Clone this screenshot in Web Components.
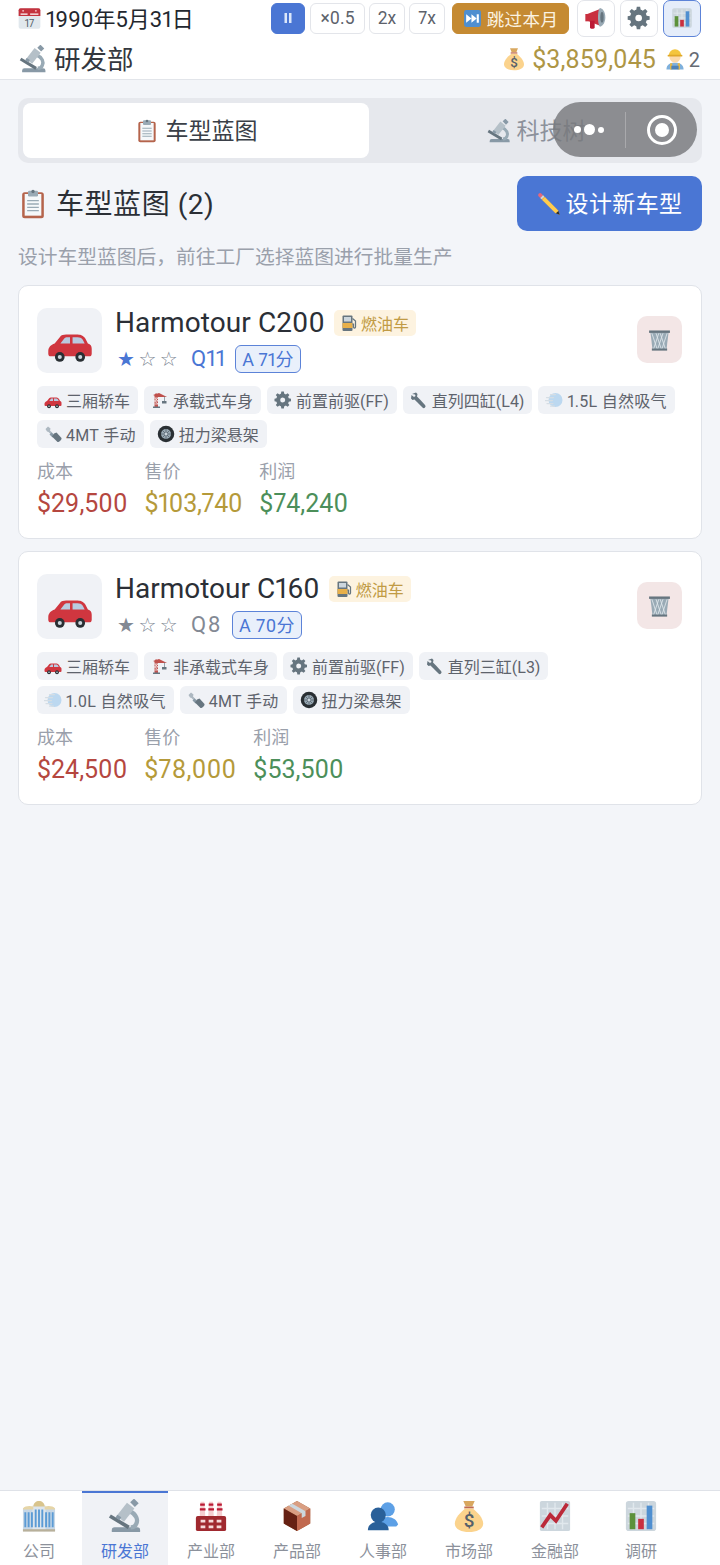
<!DOCTYPE html>
<html lang="zh"><head><meta charset="utf-8"><title>研发部</title>
<style>
html,body{margin:0;padding:0;height:100%}
body{background:#f3f5f9;font-family:Roboto,"Noto Sans CJK SC",sans-serif;color:#2b2f36;font-variant-numeric:proportional-nums}
</style></head><body>
<game-app></game-app>
<script>
const ICONS={
calendar:`<rect x="1" y="2" width="34" height="32" rx="3" fill="#e1e8ed"/><path d="M1 5a3 3 0 0 1 3-3h28a3 3 0 0 1 3 3v9H1z" fill="#c4333f"/><circle cx="8" cy="6" r="1.500" fill="#f5c0c5"/><circle cx="28" cy="6" r="1.500" fill="#f5c0c5"/><path d="M4 11h11M19 11h13" stroke="#fff" stroke-width="2"/><text x="18" y="31" text-anchor="middle" font-size="16" font-family="Roboto" fill="#55606a">17</text>`,
scope:`<path d="M4 35v-2a3 3 0 0 1 3-3h24a3 3 0 0 1 3 3v2z" fill="#8899a6"/><path d="M23 13c7 3 9 9 7 13-1 3-3 4-6 4" stroke="#99aab5" stroke-width="4.500" fill="none"/><path d="M2 18l20 12" stroke="#66757f" stroke-width="4"/><path d="M13 21l11-14" stroke="#b5c0c8" stroke-width="10"/><path d="M26 6l4-4" stroke="#8899a6" stroke-width="7"/><path d="M12 18l-2 3" stroke="#8899a6" stroke-width="5"/>`,
bag:`<path d="M12 2h12l-2.500 6h-7z" fill="#d9a860"/><rect x="13" y="8" width="10" height="2" fill="#bf6952"/><path d="M14 10h8c5 4 11 10 11 16 0 6-7 9-15 9S3 32 3 26c0-6 6-12 11-16z" fill="#fbd38d"/><text x="18" y="30" text-anchor="middle" font-size="20" font-weight="500" font-family="Roboto" fill="#55606a">$</text>`,
worker:`<path d="M4 35c0-8 6-11 14-11s14 3 14 11z" fill="#7eb0dc"/><path d="M10 25h3.500v10H10zM22.500 25H26v10h-3.500z" fill="#e8b83f"/><rect x="12" y="29" width="12" height="6" fill="#4d82b8"/><circle cx="18" cy="15" r="9" fill="#fcd9a8"/><path d="M8 12a10 10 0 0 1 20 0z" fill="#f4c53c"/><rect x="6" y="11" width="24" height="3" rx="1" fill="#e0a828"/>`,
pause:`<path d="M11 8h5v20h-5zM20 8h5v20h-5z" fill="#dbe7fa"/>`,
skip:`<rect x="2" y="2" width="32" height="32" rx="4" fill="#4f8fd0"/><path d="M6 10l10 8-10 8zM16 10l10 8-10 8z" fill="#fff"/><path d="M26 10h4v16h-4z" fill="#fff"/>`,
mega:`<path d="M5 12l20-8v26L5 22z" fill="#c9303f" /><path d="M2 12h5v11H2z" fill="#c9303f"/><path d="M9 22h7v10a2 2 0 0 1-2 2h-3a2 2 0 0 1-2-2z" fill="#bb1a34"/><path d="M24 3c5 1 8 7 8 14s-3 13-8 14c-2-1-3-7-3-14s1-13 3-14z" fill="#99aab5"/><ellipse cx="27" cy="17" rx="2.500" ry="8" fill="#66757f"/>`,
gear:`<path fill="#66757f" d="M34 20.500v-5l-4.500-.8a12 12 0 0 0-1.300-3.100l2.600-3.700-3.500-3.500-3.700 2.600a12 12 0 0 0-3.100-1.300L19.700 1h-5l-.8 4.700a12 12 0 0 0-3.100 1.300L7.100 4.400 3.600 7.900l2.600 3.700a12 12 0 0 0-1.300 3.100L1 15.500v5l3.900.8a12 12 0 0 0 1.300 3.100l-2.600 3.700 3.500 3.500 3.700-2.600a12 12 0 0 0 3.100 1.300l.8 4.700h5l.8-4.700a12 12 0 0 0 3.100-1.300l3.700 2.600 3.500-3.500-2.600-3.700a12 12 0 0 0 1.300-3.100zM17.500 23a5 5 0 1 1 0-10 5 5 0 0 1 0 10z"/>`,
chart:`<rect x="2" y="2" width="32" height="32" rx="3" fill="#ccd6dd"/><path d="M4 10h28M4 18h28M4 26h28M10 4v28M18 4v28M26 4v28" stroke="#e1e8ed" stroke-width="1.500"/><rect x="6" y="15" width="6" height="17" fill="#5c913b"/><rect x="15" y="21" width="6" height="11" fill="#c9303f"/><rect x="24" y="7" width="6" height="25" fill="#4f8fd0"/>`,
clip:`<rect x="5" y="4" width="26" height="31" rx="3" fill="#b5644c"/><rect x="8" y="6" width="20" height="26" fill="#f5f8fa"/><path d="M11 14h14M11 18h14M11 22h14M11 26h14" stroke="#99aab5" stroke-width="1.600"/><rect x="12" y="2" width="12" height="7" rx="1.500" fill="#99aab5"/><circle cx="18" cy="3" r="2" fill="#66757f"/>`,
pencil:`<path d="M9 5l23 23 2 6-6-2L5 9z" fill="#f4ac3d"/><path d="M5 9l4-4-3-3a3 3 0 0 0-4 4z" fill="#e8677b"/><path d="M9 5L5 9l2 2 4-4z" fill="#ccd6dd"/><path d="M28 32l4-4 2 6z" fill="#292f33"/><path d="M12 8l20 20-4 4L8 12z" fill="#ffcc4d"/>`,
car:`<path d="M1 26c0-3 2-5 5-6l4-5c1-1.500 3-2 5-2h8c3 0 5 .5 7 3l2 4c2 .5 3 2 3 4v4a2 2 0 0 1-2 2H3a2 2 0 0 1-2-2z" fill="#d0363f"/><path d="M10.500 20l3-4c.5-.7 1.500-1 2.500-1h2v5zM20 15h4c1.500 0 3 .5 4 2l1.500 3H20z" fill="#b9cbe0"/><circle cx="10" cy="30.500" r="3.800" fill="#292f33"/><circle cx="10" cy="30.500" r="1.600" fill="#ccd6dd"/><circle cx="26" cy="30.500" r="3.800" fill="#292f33"/><circle cx="26" cy="30.500" r="1.600" fill="#ccd6dd"/>`,
pump:`<rect x="5" y="3" width="20" height="31" rx="2" fill="#66757f"/><rect x="8" y="6" width="14" height="9" fill="#ccd6dd"/><rect x="5" y="18" width="20" height="10" fill="#e8b04a"/><path d="M25 9l6 5v12a2 2 0 0 1-4 0v-6h-2" fill="none" stroke="#66757f" stroke-width="2.500"/>`,
trash:`<path d="M5 8h26l-3 25H8z" fill="#99aab5"/><path d="M7 9l8 24M13 9l8 24M19 9l8 24M29 9l-8 24M23 9l-8 24M17 9L9 33" stroke="#e1e8ed" stroke-width="1.200" fill="none"/><rect x="3" y="5" width="30" height="3.500" fill="#66757f"/><rect x="7" y="31" width="22" height="3" fill="#66757f"/>`,
crane:`<path d="M10 4l4 4v24H7V8z" fill="#b8433f" opacity=".9"/><path d="M7 14h7M7 20h7M7 26h7M7 14l7 6M14 14l-7 6M7 20l7 6" stroke="#fff" stroke-width="1.300"/><path d="M4 8l12-4 16 8H14z" fill="#c0504c"/><rect x="4" y="31" width="14" height="3" fill="#66757f"/><path d="M22 20h9v5h-9z" fill="#66757f"/><path d="M27 11v9" stroke="#66757f" stroke-width="1.300"/>`,
wrench:`<path fill="#66757f" d="M4 6l8-3 3 3-1 5 6 6 10 11a3.500 3.500 0 0 1-5 5L14 22l-5-5-4 1-3-3 1-7 5 4 3-2-1-3z"/>`,
wind:`<circle cx="21" cy="18" r="14" fill="#bcd8f0"/><path d="M11 7h10M3 13h14M1 19h14M4 25h12M11 30h8" stroke="#d5dde4" stroke-width="2.500" stroke-linecap="round"/>`,
spanner:`<path d="M3 8l5-5 5 4-1 4 7 7-3 3-7-7-3-1z" fill="#adb8c1"/><path d="M15 15l6 6-4 4-6-6z" fill="#8899a6"/><path d="M20 17l5-2 10 11c1 3-5 9-8 8L16 23z" fill="#66757f"/>`,
wheel:`<circle cx="18" cy="18" r="16.500" fill="#292f33"/><circle cx="18" cy="18" r="10" fill="#99aab5"/><path d="M18 8v20M8 18h20M11 11l14 14M25 11L11 25" stroke="#55606a" stroke-width="1.600"/><circle cx="18" cy="18" r="2.500" fill="#ccd6dd"/>`,
hq:`<rect x="1" y="10" width="12" height="24" fill="#c7d7e6"/><rect x="23" y="10" width="12" height="24" fill="#c7d7e6"/><rect x="11" y="7" width="14" height="27" fill="#dde5ec"/><path d="M1 10c2-3 8-3 11-2v3H1zM24 8c3-1 9-1 11 2v1H24z" fill="#e6d5a7"/><path d="M12 8c0-4 3-6 6-6s6 2 6 6z" fill="#d9c48c"/><path d="M3.500 14v16M7 14v16M10.500 14v16M14.500 11v19M18 11v19M21.500 11v19M25.500 14v16M29 14v16M32.500 14v16" stroke="#5b9bd5" stroke-width="2"/><rect x="1" y="32" width="34" height="2.500" fill="#b8b09a"/>`,
factory:`<path d="M7 3h4l1 16H6zM16 3h4l1 16h-6zM25 3h4l1 16h-6z" fill="#f5ced0"/><path d="M6.500 6h5M6.200 11h6M15.500 6h5M15.200 11h6M24.500 6h5M24.200 11h6" stroke="#bb1a34" stroke-width="2.500"/><rect x="2" y="18" width="32" height="16" rx="2" fill="#a0292f"/><path d="M7 22h5v3H7zM15.500 22h5v3h-5zM24 22h5v3h-5zM7 28h5v3H7zM15.500 28h5v3h-5zM24 28h5v3h-5z" fill="#f5d9d9"/>`,
box:`<path d="M18 2l14 8v16L18 34 4 26V10z" fill="#a0663f"/><path d="M18 2l14 8-14 8L4 10z" fill="#d99e82"/><path d="M18 18l14-8v16L18 34z" fill="#c1694f"/><path d="M4 10l14 8v16L4 26z" fill="#662113"/><path d="M9 7l14 8v5l4-2v-5L13 5z" fill="#ccd6dd"/>`,
people:`<circle cx="23" cy="11" r="7.500" fill="#5da0e6"/><path d="M13 28c0-6 5-9 10-9s10 3 11 8l-2 2H15z" fill="#5da0e6"/><circle cx="13" cy="17" r="8" fill="#2a6099"/><path d="M2 33c0-6 5-9 11-9s11 3 11 9z" fill="#2a6099"/>`,
trend:`<rect x="2" y="2" width="32" height="32" rx="2" fill="#ccd6dd"/><path d="M4 10h28M4 18h28M4 26h28M10 4v28M18 4v28M26 4v28" stroke="#e1e8ed" stroke-width="1.500"/><path d="M4 30l9-13 6 6L31 5" fill="none" stroke="#bb2a3a" stroke-width="4"/>`,
};
class EmojiIcon extends HTMLElement{
  connectedCallback(){
    const s=this.getAttribute('size')||20;
    const r=this.shadowRoot||this.attachShadow({mode:'open'});
    r.innerHTML=`<style>:host{display:inline-flex;flex:none;width:${s}px;height:${s}px}svg{width:100%;height:100%;display:block}</style><svg viewBox="0 0 36 36" aria-hidden="true">${ICONS[this.getAttribute('name')]||''}</svg>`;
  }
}
customElements.define('emoji-icon',EmojiIcon);

class CtrlBtn extends HTMLElement{
  constructor(){super();this.attachShadow({mode:'open'}).innerHTML=`<style>
  :host{display:inline-flex;align-items:center;justify-content:center;box-sizing:border-box;height:31px;flex:none;border:1.5px solid #e3e5ea;border-radius:6px;background:#fff;color:#5d626b;font-size:17.500px;gap:5px;padding-bottom:1px}
  :host([kind=play]){background:#4a76d4;border-color:#4a76d4;width:34px;margin-right:1px}
  :host([kind=skip]){background:#c58a32;border-color:#c58a32;color:#fbf3e2;width:117px;margin:0 8px 0 7px;letter-spacing:.4px}
  :host([kind=tool]){width:38px;height:37px;border-radius:7px}
  :host([kind=on]){width:38px;height:37px;border-radius:7px;background:#e5edfa;border-color:#5c83d8}
  </style><slot></slot>`}
}
customElements.define('ctrl-btn',CtrlBtn);

class TopBar extends HTMLElement{
  constructor(){super();this.attachShadow({mode:'open'}).innerHTML=`<style>
  :host{display:block;box-sizing:border-box;height:80px;background:#fff;border-bottom:1px solid #e2e5ea;padding:0 19px 0 18px}
  .r{display:flex;align-items:center;justify-content:space-between}
  .r1{height:37px}.r2{height:42px;padding-top:1px;box-sizing:border-box}
  .g{display:flex;align-items:center}
  .date{font-size:22px;color:#23272e;margin-left:5px;padding-bottom:3px}
  .sp{gap:4px}.tl{gap:5px}
  .dept{font-size:26.500px;color:#33373e;margin-left:7px;padding-bottom:3px}
  .money{font-size:25px;color:#ae9645;margin-left:6px;padding-top:2px}
  .num{font-size:20px;color:#666b74;margin-left:3px;padding-top:2px}
  </style>
  <div class="r r1"><div class="g"><emoji-icon name="calendar" size="23"></emoji-icon><span class="date">1990年5月31日</span></div>
  <div class="g"><div class="g sp"><ctrl-btn kind="play"><emoji-icon name="pause" size="18"></emoji-icon></ctrl-btn><ctrl-btn style="width:55px">×0.5</ctrl-btn><ctrl-btn style="width:36px">2x</ctrl-btn><ctrl-btn style="width:36px">7x</ctrl-btn></div><ctrl-btn kind="skip"><emoji-icon name="skip" size="19"></emoji-icon><span>跳过本月</span></ctrl-btn><div class="g tl"><ctrl-btn kind="tool"><emoji-icon name="mega" size="24"></emoji-icon></ctrl-btn><ctrl-btn kind="tool"><emoji-icon name="gear" size="24"></emoji-icon></ctrl-btn><ctrl-btn kind="on"><emoji-icon name="chart" size="22"></emoji-icon></ctrl-btn></div></div></div>
  <div class="r r2"><div class="g" style="margin-left:1px"><emoji-icon name="scope" size="28"></emoji-icon><span class="dept">研发部</span></div>
  <div class="g" style="padding-right:1px"><emoji-icon name="bag" size="24"></emoji-icon><span class="money">$3,859,045</span><emoji-icon name="worker" size="22" style="margin-left:8px"></emoji-icon><span class="num">2</span></div></div>`}
}
customElements.define('top-bar',TopBar);

class TabBar extends HTMLElement{
  constructor(){super();this.attachShadow({mode:'open'}).innerHTML=`<style>
  :host{display:flex;position:relative;box-sizing:border-box;height:65px;background:#e6e8ed;border-radius:10px;padding:5px;gap:0}
  .t{flex:1;display:flex;align-items:center;justify-content:center;gap:6px;font-size:23px;color:#8c919b;border-radius:8px;padding-left:6px}
  .t span{padding-bottom:3px}
  .t.on{flex:none;width:346px;background:#fff;color:#3a3f47;padding-left:0;gap:7px}
  </style><div class="t on"><emoji-icon name="clip" size="24"></emoji-icon><span>车型蓝图</span></div><div class="t"><emoji-icon name="scope" size="24"></emoji-icon><span>科技树</span></div><slot></slot>`}
}
customElements.define('tab-bar',TabBar);

class WxCapsule extends HTMLElement{
  constructor(){super();this.attachShadow({mode:'open'}).innerHTML=`<style>
  :host{position:absolute;right:5px;top:4px;width:144px;height:55px;border-radius:28px;background:rgba(120,121,125,.82);display:flex;align-items:center}
  .a{width:72px;display:flex;justify-content:center;align-items:center;gap:3px}
  i{display:block;border-radius:50%;background:#fff}
  .l{width:1px;height:36px;background:rgba(255,255,255,.25)}
  .b{flex:1;display:flex;justify-content:center}
  .o{width:30px;height:30px;box-sizing:border-box;border:3px solid #fff;border-radius:50%;display:flex;align-items:center;justify-content:center}
  .o i{width:14px;height:14px}
  </style><div class="a"><i style="width:7px;height:7px"></i><i style="width:11px;height:11px"></i><i style="width:6px;height:6px"></i></div><div class="l"></div><div class="b"><div class="o"><i></i></div></div>`}
}
customElements.define('wx-capsule',WxCapsule);

class SpecChip extends HTMLElement{
  constructor(){super();this.attachShadow({mode:'open'}).innerHTML=`<style>
  :host{display:inline-flex;align-items:center;gap:4px;box-sizing:border-box;height:28px;padding:0 8px 1px 7px;background:#f0f2f6;border-radius:6px;font-size:16px;color:#5e636c;white-space:nowrap}
  :host([latin]){letter-spacing:.3px}
  emoji-icon{margin-top:1px}
  </style><emoji-icon size="18"></emoji-icon><slot></slot>`;
  }
  connectedCallback(){const e=this.shadowRoot.querySelector('emoji-icon');e.setAttribute('name',this.getAttribute('icon'));e.connectedCallback()}
}
customElements.define('spec-chip',SpecChip);

class BlueprintCard extends HTMLElement{
  constructor(){super();this.attachShadow({mode:'open'})}
  connectedCallback(){
    const a=n=>this.getAttribute(n);
    const hi=a('qual')==='hi';
    const qc=hi?'#4a76d4':'#838994';
    this.shadowRoot.innerHTML=`<style>
    :host{display:block;box-sizing:border-box;background:#fff;border:1px solid #e0e3e9;border-radius:10px;padding:22px 18px 16px}
    .top{display:flex;gap:13px}
    .thumb{width:65px;height:65px;border-radius:10px;background:#f0f2f6;display:flex;align-items:center;justify-content:center;flex:none}
    .main{flex:1;min-width:0}
    .l1{display:flex;align-items:center;gap:9px;height:30px}
    .name{font-size:28px;color:#2b2f36;letter-spacing:${hi?'.1px':'0'};line-height:30px}
    .fuel{display:inline-flex;align-items:center;gap:3px;height:26px;box-sizing:border-box;padding:0 7px 1px 6px;background:#fdf3e0;border-radius:5px;color:#c19b45;font-size:16px}
    .l2{display:flex;align-items:center;height:29px;margin-top:6px;color:${qc}}
    .stars{font-family:"DejaVu Sans",sans-serif;font-size:20px;letter-spacing:3.500px;width:74px;margin-left:2px;flex:none;white-space:nowrap}
    .stars b{font-weight:400}.stars span{color:#7e8894}
    .q{font-size:22px;margin-right:10px;letter-spacing:${hi?'0':'1.500px'}}
    .score{display:inline-flex;align-items:center;height:28px;box-sizing:border-box;padding:0 6px 1px;border:1.5px solid #5c83d8;background:#e9f0fb;border-radius:6px;color:#4a76d4;font-size:18px;letter-spacing:${hi?'0':'.4px'}}
    .del{width:45px;height:47px;border-radius:10px;background:#f3e6e6;display:flex;align-items:center;justify-content:center;flex:none;margin:8px 1px 0 0}
    .chips{display:flex;flex-wrap:wrap;gap:6px;margin-top:13px}
    .stats{display:flex;gap:17px;margin-top:10px}
    .lab{font-size:18px;color:#9aa0ab;line-height:28px}
    .val{font-size:25px;line-height:36px}
    .pr{letter-spacing:${hi?'-.25px':'.3px'}}
    </style>
    <div class="top"><div class="thumb"><emoji-icon name="car" size="46"></emoji-icon></div>
      <div class="main"><div class="l1"><span class="name">${a('name')}</span><span class="fuel"><emoji-icon name="pump" size="18"></emoji-icon>燃油车</span></div>
      <div class="l2"><span class="stars"><b>★</b><span>☆☆</span></span><span class="q">${a('q')}</span><span class="score">${a('score')}</span></div></div>
      <div class="del"><emoji-icon name="trash" size="25"></emoji-icon></div></div>
    <div class="chips"><slot></slot></div>
    <div class="stats">
      <div><div class="lab">成本</div><div class="val" style="color:#b5473f">${a('cost')}</div></div>
      <div><div class="lab">售价</div><div class="val pr" style="color:#b59a3a">${a('price')}</div></div>
      <div><div class="lab">利润</div><div class="val" style="color:#4c8f5a">${a('profit')}</div></div>
    </div>`;
  }
}
customElements.define('blueprint-card',BlueprintCard);

class NavItem extends HTMLElement{
  constructor(){super();this.attachShadow({mode:'open'})}
  connectedCallback(){
    this.shadowRoot.innerHTML=`<style>
    :host{display:flex;flex-direction:column;align-items:center;flex:none;width:86px;box-sizing:border-box;border-top:2px solid transparent;color:#8c919b;font-size:16px;padding-top:6px}
    :host([active]){background:#f0f2f6;border-top-color:#4a76d4;color:#4a76d4}
    span{line-height:20px;margin-top:9px}
    </style><emoji-icon name="${this.getAttribute('icon')}" size="34"></emoji-icon><span><slot></slot></span>`;
  }
}
customElements.define('nav-item',NavItem);

class BottomNav extends HTMLElement{
  constructor(){super();this.attachShadow({mode:'open'}).innerHTML=`<style>
  :host{display:flex;box-sizing:border-box;height:75px;background:#fff;border-top:1px solid #dfe2e8;overflow:hidden;flex:none}
  .w{display:flex;margin-left:-4px}
  </style><div class="w"><slot></slot></div>`}
}
customElements.define('bottom-nav',BottomNav);

class GameApp extends HTMLElement{
  constructor(){super();this.attachShadow({mode:'open'}).innerHTML=`<style>
  :host{display:flex;flex-direction:column;height:1565px;width:720px;overflow:hidden}
  main{flex:1;padding:18px 18px 0;display:flex;flex-direction:column;min-height:0}
  .hd{display:flex;align-items:center;justify-content:space-between;margin-top:13px;height:55px}
  .tt{display:flex;align-items:center;gap:8px;font-size:28px;color:#2b2f36;letter-spacing:.55px}
  .tt span,.new span{padding-bottom:3px}
  .new{display:flex;align-items:center;justify-content:center;gap:5px;width:185px;height:55px;border-radius:10px;background:#4a76d4;color:#fff;font-size:23px;letter-spacing:.4px}
  .sub{font-size:19.750px;color:#9aa0ab;margin:14px 0 14px;line-height:26px}
  blueprint-card{margin-bottom:12px}
  </style>
  <top-bar></top-bar>
  <main>
    <tab-bar><wx-capsule></wx-capsule></tab-bar>
    <div class="hd"><div class="tt"><emoji-icon name="clip" size="30"></emoji-icon><span>车型蓝图 (2)</span></div><div class="new"><emoji-icon name="pencil" size="24"></emoji-icon><span>设计新车型</span></div></div>
    <div class="sub">设计车型蓝图后，前往工厂选择蓝图进行批量生产</div>
    <blueprint-card name="Harmotour C200" qual="hi" q="Q11" score="A 71分" cost="$29,500" price="$103,740" profit="$74,240">
      <spec-chip icon="car">三厢轿车</spec-chip><spec-chip icon="crane">承载式车身</spec-chip><spec-chip icon="gear">前置前驱(FF)</spec-chip><spec-chip icon="wrench">直列四缸(L4)</spec-chip><spec-chip icon="wind" latin>1.5L 自然吸气</spec-chip><spec-chip icon="spanner" latin>4MT 手动</spec-chip><spec-chip icon="wheel">扭力梁悬架</spec-chip>
    </blueprint-card>
    <blueprint-card name="Harmotour C160" qual="lo" q="Q8" score="A 70分" cost="$24,500" price="$78,000" profit="$53,500">
      <spec-chip icon="car">三厢轿车</spec-chip><spec-chip icon="crane">非承载式车身</spec-chip><spec-chip icon="gear">前置前驱(FF)</spec-chip><spec-chip icon="wrench">直列三缸(L3)</spec-chip><spec-chip icon="wind" latin>1.0L 自然吸气</spec-chip><spec-chip icon="spanner" latin>4MT 手动</spec-chip><spec-chip icon="wheel">扭力梁悬架</spec-chip>
    </blueprint-card>
  </main>
  <bottom-nav>
    <nav-item icon="hq">公司</nav-item><nav-item icon="scope" active>研发部</nav-item><nav-item icon="factory">产业部</nav-item><nav-item icon="box">产品部</nav-item><nav-item icon="people">人事部</nav-item><nav-item icon="bag">市场部</nav-item><nav-item icon="trend">金融部</nav-item><nav-item icon="chart">调研</nav-item>
  </bottom-nav>`}
}
customElements.define('game-app',GameApp);
</script>
</body></html>
